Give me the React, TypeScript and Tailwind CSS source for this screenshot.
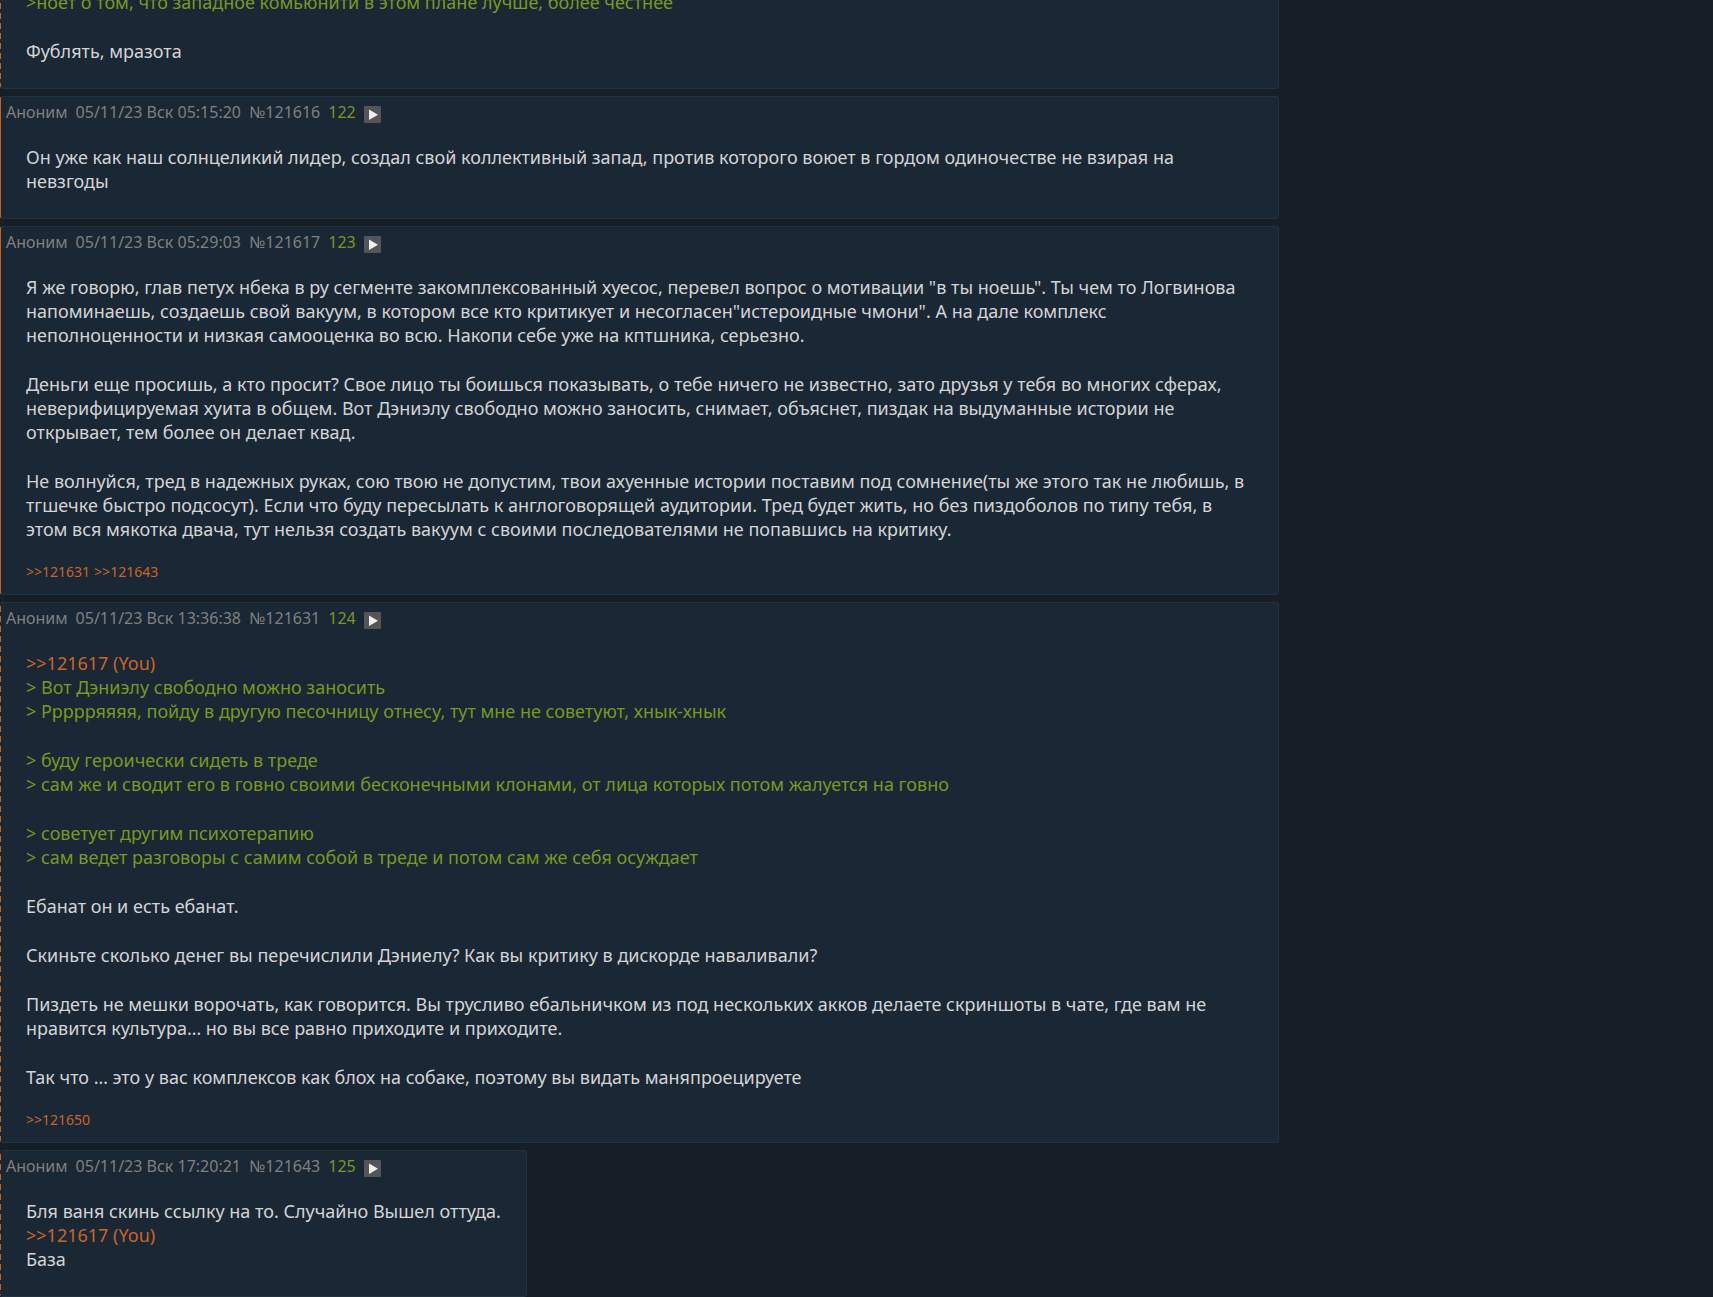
import React from 'react';

type Line = { text: string; kind?: 'quote' | 'link' };

type Post = {
  date?: string;
  id?: string;
  index?: number;
  mine?: boolean;
  compact?: boolean;
  paragraphs: Line[][];
  replies?: string[];
};

const t = (text: string): Line => ({ text });
const q = (text: string): Line => ({ text, kind: 'quote' });
const link = (text: string): Line => ({ text, kind: 'link' });

const posts: Post[] = [
  {
    paragraphs: [
      [q('>ноет о том, что западное комьюнити в этом плане лучше, более честнее')],
      [t('Фублять, мразота')],
    ],
  },
  {
    date: '05/11/23 Вск 05:15:20',
    id: '121616',
    index: 122,
    mine: true,
    paragraphs: [
      [
        t('Он уже как наш солнцеликий лидер, создал свой коллективный запад, против которого воюет в гордом одиночестве не взирая на'),
        t('невзгоды'),
      ],
    ],
  },
  {
    date: '05/11/23 Вск 05:29:03',
    id: '121617',
    index: 123,
    mine: true,
    paragraphs: [
      [
        t('Я же говорю, глав петух нбека в ру сегменте закомплексованный хуесос, перевел вопрос о мотивации "в ты ноешь". Ты чем то Логвинова'),
        t('напоминаешь, создаешь свой вакуум, в котором все кто критикует и несогласен"истероидные чмони". А на дале комплекс'),
        t('неполноценности и низкая самооценка во всю. Накопи себе уже на кптшника, серьезно.'),
      ],
      [
        t('Деньги еще просишь, а кто просит? Свое лицо ты боишься показывать, о тебе ничего не известно, зато друзья у тебя во многих сферах,'),
        t('неверифицируемая хуита в общем. Вот Дэниэлу свободно можно заносить, снимает, объяснет, пиздак на выдуманные истории не'),
        t('открывает, тем более он делает квад.'),
      ],
      [
        t('Не волнуйся, тред в надежных руках, сою твою не допустим, твои ахуенные истории поставим под сомнение(ты же этого так не любишь, в'),
        t('тгшечке быстро подсосут). Если что буду пересылать к англоговорящей аудитории. Тред будет жить, но без пиздоболов по типу тебя, в'),
        t('этом вся мякотка двача, тут нельзя создать вакуум с своими последователями не попавшись на критику.'),
      ],
    ],
    replies: ['121631', '121643'],
  },
  {
    date: '05/11/23 Вск 13:36:38',
    id: '121631',
    index: 124,
    paragraphs: [
      [
        link('>>121617 (You)'),
        q('> Вот Дэниэлу свободно можно заносить'),
        q('> Ррррряяяя, пойду в другую песочницу отнесу, тут мне не советуют, хнык-хнык'),
      ],
      [
        q('> буду героически сидеть в треде'),
        q('> сам же и сводит его в говно своими бесконечными клонами, от лица которых потом жалуется на говно'),
      ],
      [
        q('> советует другим психотерапию'),
        q('> сам ведет разговоры с самим собой в треде и потом сам же себя осуждает'),
      ],
      [t('Ебанат он и есть ебанат.')],
      [t('Скиньте сколько денег вы перечислили Дэниелу? Как вы критику в дискорде наваливали?')],
      [
        t('Пиздеть не мешки ворочать, как говорится. Вы трусливо ебальничком из под нескольких акков делаете скриншоты в чате, где вам не'),
        t('нравится культура… но вы все равно приходите и приходите.'),
      ],
      [t('Так что … это у вас комплексов как блох на собаке, поэтому вы видать маняпроецируете')],
    ],
    replies: ['121650'],
  },
  {
    date: '05/11/23 Вск 17:20:21',
    id: '121643',
    index: 125,
    compact: true,
    paragraphs: [
      [
        t('Бля ваня скинь ссылку на то. Случайно Вышел оттуда.'),
        link('>>121617 (You)'),
        t('База'),
      ],
    ],
  },
];

function PostLine({ line }: { line: Line }) {
  if (line.kind === 'link') {
    return <a href="#121617" className="block w-fit text-[#cc6428]">{line.text}</a>;
  }
  if (line.kind === 'quote') {
    return <span className="block text-[#789922]">{line.text}</span>;
  }
  return <span className="block">{line.text}</span>;
}

function PostHeader({ post }: { post: Post }) {
  return (
    <header className="flex h-[30px] items-center gap-2 pl-[5px] text-base text-[#808080]">
      <span>Аноним</span>
      <time>{post.date}</time>
      <a href={`#${post.id}`}>№{post.id}</a>
      <span className="text-[#789922]">{post.index}</span>
      <button type="button" aria-label="Меню поста" className="mt-1 cursor-pointer">
        <svg width="17" height="17" viewBox="0 0 17 17" className="block">
          <rect width="17" height="17" rx="1" fill="#555555" />
          <path d="M5 3.5v10.5l9-5.2z" fill="#f0f0f0" />
        </svg>
      </button>
    </header>
  );
}

// own posts get a solid marker on the left, answers to them a dashed one
const solidMark = 'border-l-[#c4621f] ';
const dashedMark =
  'border-l-0 pl-px bg-[repeating-linear-gradient(transparent_0_3px,#c4621f_3px_9px,transparent_9px_10px)] bg-[length:1px_100%] bg-no-repeat ';

function PostCard({ post }: { post: Post }) {
  return (
    <article
      id={post.id}
      className={
        'rounded-[3px] border border-[#23323f] bg-[#1a2734] ' +
        (post.mine ? solidMark : dashedMark) +
        (post.compact ? 'w-fit' : 'w-full max-w-[1279px]')
      }
    >
      {post.id && <PostHeader post={post} />}
      <div className={'flex flex-col gap-[25px] px-[25px] text-lg leading-6 ' + (post.id ? 'pt-[18px]' : '')}>
        {post.paragraphs.map((lines, i) => (
          <p key={i}>
            {lines.map((line, j) => (
              <PostLine key={j} line={line} />
            ))}
          </p>
        ))}
      </div>
      {post.replies ? (
        <div className="flex gap-1 px-[25px] pt-[22px] pb-[13px] text-sm leading-[18px] text-[#cc6428]">
          {post.replies.map((id) => (
            <a key={id} href={`#${id}`}>&gt;&gt;{id}</a>
          ))}
        </div>
      ) : (
        <div className="h-[25px]" />
      )}
    </article>
  );
}

export default function App() {
  return (
    <main className="h-screen overflow-hidden bg-[#161f28] font-['Noto_Sans',sans-serif] text-[#d4d4d4]">
      {/* the thread is scrolled part way into the first post */}
      <div className="-mt-[11px] flex flex-col gap-[7px]">
        {posts.map((post, i) => (
          <PostCard key={i} post={post} />
        ))}
      </div>
    </main>
  );
}
